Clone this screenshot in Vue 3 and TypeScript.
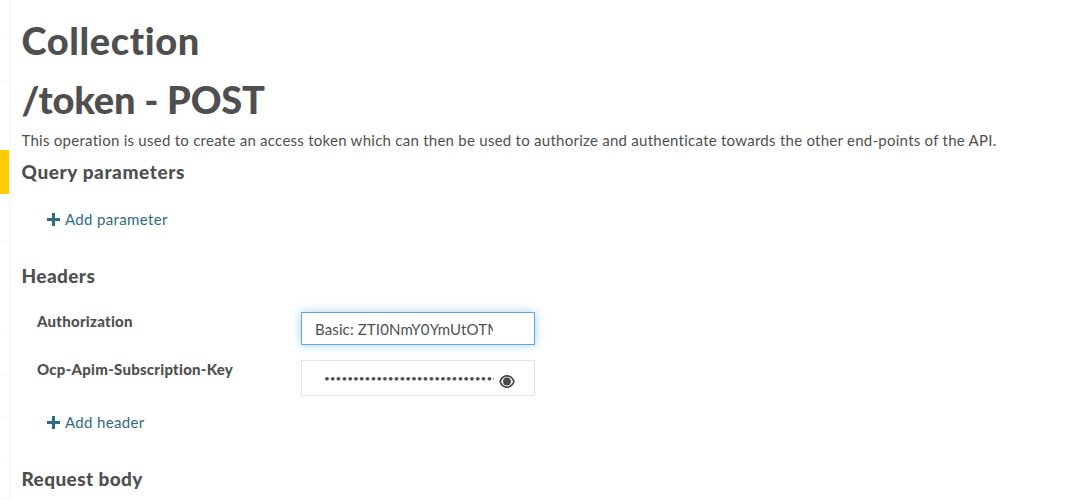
<script setup lang="ts">
const headers = [
  { name: "Authorization", value: "Basic: ZTI0NmY0YmUtOTM4", type: "text", focused: true },
  { name: "Ocp-Apim-Subscription-Key", value: "012345678901234567890123456789012345", type: "password", focused: false }
];
// heights of the collapsed nav entries; only their dividers are visible here
const railItems = [
  { height: 34, active: false },
  { height: 47, active: false },
  { height: 69, active: false, plain: true },
  { height: 44, active: true, plain: true },
  { height: 47, active: false },
  { height: 93, active: false },
  { height: 42, active: false },
  { height: 41, active: false },
  { height: 41, active: false },
  { height: 42, active: false }
];
</script>

<template>
  <div class="page">
    <aside class="rail">
      <div
        v-for="(item, i) in railItems"
        :key="i"
        class="rail-item"
        :class="{ active: item.active, plain: item.plain }"
        :style="{ height: item.height + 'px' }"
      ></div>
    </aside>
    <main class="content">
      <h1>Collection</h1>
      <h1 class="op-title">/token - POST</h1>
      <p class="desc">This operation is used to create an access token which can then be used to authorize and authenticate towards the other end-points of the API.</p>

      <h2 class="query">Query parameters</h2>
      <a class="add add-param"><span class="plus"></span>Add parameter</a>

      <h2 class="headers">Headers</h2>
      <div class="rows">
        <div v-for="h in headers" :key="h.name" class="row">
          <label>{{ h.name }}</label>
          <div class="field" :class="{ focused: h.focused, secret: h.type === 'password' }">
            <input :type="h.type" :value="h.value" readonly />
            <svg v-if="h.type === 'password'" class="eye" viewBox="0 0 24 20" width="16" height="13">
              <path fill="#4a4a4a" fill-rule="evenodd" d="M12 0C6.500 0 2 3.600 0 10c2 6.400 6.500 10 12 10s10-3.600 12-10C22 3.600 17.500 0 12 0zm0 2.500c3.900 0 7.500 2.600 9.300 7.500-1.800 4.900-5.400 7.500-9.300 7.500S4.500 14.900 2.700 10C4.500 5.100 8.100 2.500 12 2.500zM12 4a6 6 0 1 0 0 12 6 6 0 0 0 0-12z" />
            </svg>
          </div>
        </div>
      </div>
      <a class="add add-header"><span class="plus"></span>Add header</a>

      <h2 class="body">Request body</h2>
    </main>
  </div>
</template>

<style>
html, body {
  margin: 0;
  background: #fff;
  overflow: hidden;
}
</style>

<style scoped>
.page {
  display: flex;
  height: 500px;
  width: 1072px;
  overflow: hidden;
  font-family: Lato, "Noto Sans", sans-serif;
  color: #4f4f4f;
}
.rail {
  width: 9px;
  flex: none;
  border-right: 2px solid #f8f8f8;
}
.rail-item {
  box-sizing: border-box;
  border-bottom: 1px solid #f8f8f8;
}
.rail-item.plain {
  border-bottom: 0;
}
.rail-item.active {
  background: #ffcc00;
}
.content {
  flex: 1;
  padding: 20px 0 0 10.5px;
}
h1 {
  margin: 0;
  font-size: 38px;
  line-height: 40px;
  font-weight: 900;
  letter-spacing: 0.6px;
}
.op-title {
  margin-top: 19px;
  letter-spacing: -0.2px;
}
.desc {
  margin: 11px 0 0;
  font-size: 15px;
  line-height: 20px;
  letter-spacing: 0.26px;
}
h2 {
  margin: 0;
  font-size: 19px;
  line-height: 22px;
  font-weight: 900;
  letter-spacing: 0.4px;
}
.query {
  margin-top: 11px;
  letter-spacing: 0.6px;
}
.add {
  display: flex;
  align-items: center;
  gap: 5px;
  margin-left: 25.5px;
  font-size: 15px;
  line-height: 20px;
  color: #2f6a87;
  letter-spacing: 0.35px;
}
.add-param {
  margin-top: 26px;
}
.plus {
  width: 13px;
  height: 13px;
  background:
    linear-gradient(#2f6a87, #2f6a87) center / 13px 3px no-repeat,
    linear-gradient(#2f6a87, #2f6a87) center / 3px 13px no-repeat;
}
.headers {
  margin-top: 36px;
}
.rows {
  margin-top: 24px;
}
.row {
  display: flex;
  margin-left: 15.5px;
  height: 48px;
}
label {
  width: 264px;
  flex: none;
  font-size: 15px;
  line-height: 20px;
  font-weight: 900;
  letter-spacing: 0.25px;
}
.field {
  width: 234px;
  height: 36px;
  margin-top: 1px;
  box-sizing: border-box;
  border: 1px solid #e4e4e4;
  padding: 0 0 0 13px;
  display: flex;
  align-items: center;
  background: #fff;
}
.field.focused {
  height: 33px;
  border-color: #5aa9e6;
  box-shadow: 0 0 9px rgba(90, 169, 230, 0.55);
}
.field.secret {
  padding-left: 22px;
}
.field input {
  width: 178px;
  flex: none;
  border: 0;
  outline: 0;
  padding: 0;
  background: transparent;
  font: inherit;
  font-size: 15px;
  color: #4f4f4f;
  letter-spacing: 0.12px;
}
.field.secret input {
  width: 170px;
  font-size: 10px;
  letter-spacing: 0;
}
.eye {
  flex: none;
  margin: 7px 0 0 5px;
}
.add-header {
  margin-top: 5px;
}
.body {
  margin-top: 36px;
}
</style>
